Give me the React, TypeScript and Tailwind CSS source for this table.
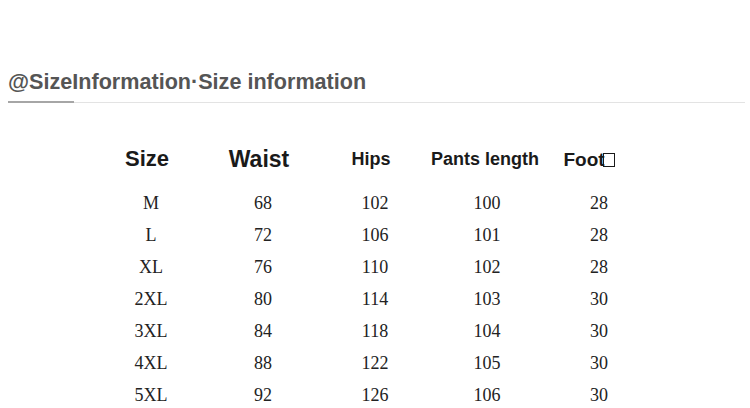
const headers = [
  { label: "Size", cls: "text-[22px] pr-[8px]" },
  { label: "Waist", cls: "text-[23px] pr-[8px]" },
  { label: "Hips", cls: "text-[18px] pr-[8px]" },
  { label: "Pants length", cls: "text-[18px] pr-[8px]" },
  { label: "Foot", cls: "text-[19px] pr-[20px]", box: true },
];

const rows = [
  ["M", "68", "102", "100", "28"],
  ["L", "72", "106", "101", "28"],
  ["XL", "76", "110", "102", "28"],
  ["2XL", "80", "114", "103", "30"],
  ["3XL", "84", "118", "104", "30"],
  ["4XL", "88", "122", "105", "30"],
  ["5XL", "92", "126", "106", "30"],
];

export default function App() {
  return (
    <div className="w-[750px] h-[408px] overflow-hidden bg-white">
      <div className="pt-[68px] px-[8px] pr-[5px]">
        <h2
          className="text-[21.6px] leading-[28px] font-bold text-[#555555]"
          style={{ fontFamily: '"Liberation Sans", Arial, sans-serif' }}
        >
          @SizeInformation·Size information
        </h2>
        <div className="mt-[5px] border-b border-[#e3e3e3]">
          <div className="w-[66px] h-[2px] bg-[#a6a6a6] -mb-px" />
        </div>
      </div>

      <div className="ml-[95px] mt-[42px] w-[560px]">
        <div
          className="grid grid-cols-5 h-[28px] items-center font-bold text-[#1a1a1a]"
          style={{ fontFamily: '"Liberation Sans", Arial, sans-serif' }}
        >
          {headers.map((h) => (
            <div key={h.label} className={`text-center whitespace-nowrap leading-none ${h.cls}`}>
              {h.label}
              {h.box && (
                <span className="inline-block w-[12px] h-[14px] border-[1.5px] border-[#1a1a1a] -ml-[2px] align-[-1px]" />
              )}
            </div>
          ))}
        </div>
        <div
          className="mt-[14px] text-[18px] text-[#222222]"
          style={{ fontFamily: '"Liberation Serif", "Times New Roman", serif' }}
        >
          {rows.map((r) => (
            <div key={r[0]} className="grid grid-cols-5 h-[32px] items-center">
              {r.map((c, i) => (
                <div key={i} className="text-center leading-none">
                  {c}
                </div>
              ))}
            </div>
          ))}
        </div>
      </div>
    </div>
  );
}
